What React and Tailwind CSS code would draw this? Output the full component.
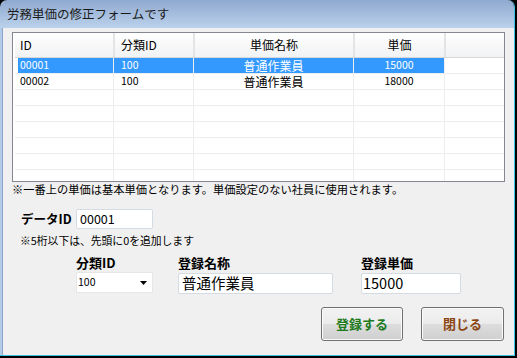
import React from "react";

const FONT = { fontFamily: '"Noto Sans CJK JP", "Noto Sans", sans-serif' };

const rows = [
  { id: "00001", cat: "100", name: "普通作業員", price: "15000", sel: true },
  { id: "00002", cat: "100", name: "普通作業員", price: "18000" },
  {}, {}, {}, {}, {}, {},
];

function Row({ r }) {
  const sel = r.sel;
  const cell = sel ? "bg-[#3399ff] text-white" : "bg-white text-black";
  return (
    <div className="flex h-[16px] shrink-0">
      <div className="w-[3px] border-b border-[#ededed] bg-white" />
      <div className={`w-[96px] border-b border-r border-[#ededed] pl-[2px] flex items-center text-[10.5px] leading-none ${cell}`}>{r.id}</div>
      <div className={`w-[80px] border-b border-r border-[#ededed] pl-[7px] flex items-center text-[10.5px] leading-none ${cell}`}>{r.cat}</div>
      <div className={`w-[160px] border-b border-r border-[#ededed] flex items-center justify-center text-[12px] leading-none ${cell}`}>{r.name}</div>
      <div className={`w-[91px] border-b border-r border-[#ededed] flex items-center justify-center text-[10.5px] leading-none ${cell}`}>{r.price}</div>
      <div className="flex-1 border-b border-[#ededed] bg-white" />
    </div>
  );
}

function HeaderCell({ w, children, center, pl }) {
  return (
    <div className={`${w} ${pl || ""} h-full flex items-center ${center ? "justify-center" : ""} border-r-2 border-[#e4e4e4]`}>
      {children}
    </div>
  );
}

export default function App() {
  return (
    <div className="w-[517px] h-[358px] bg-black text-black" style={FONT}>
      <div className="w-[515px] h-[356px] rounded-t-[7px] overflow-hidden flex flex-col border-r border-b border-[#3cc0e4]">
        <div className="h-[28px] shrink-0 bg-gradient-to-b from-[#90a9cf] to-[#bbd2ec] pl-[7px] flex items-center text-[12.5px] text-[#1a1a1a]">
          労務単価の修正フォームです
        </div>
        <div className="flex-1 flex border-l-2 border-[#b4cbe7]">
          <div className="flex-1 flex flex-col border-l border-[#8aa6cc] bg-[#f0f0f0]">
            <div className="pl-[9px] pt-[4px]">
              <div className="w-[493px] h-[150px] border border-[#828790] bg-white pl-[2px] flex flex-col overflow-hidden">
                <div className="h-[25px] shrink-0 flex border-b border-[#d8d8d8] bg-gradient-to-b from-white to-[#f1f2f4] text-[12px]">
                  <HeaderCell w="w-[100px]" pl="pl-[5px]">ID</HeaderCell>
                  <HeaderCell w="w-[80px]" pl="pl-[6px]">分類ID</HeaderCell>
                  <HeaderCell w="w-[160px]" center>単価名称</HeaderCell>
                  <HeaderCell w="w-[91px]" center>単価</HeaderCell>
                  <div className="flex-1" />
                </div>
                {rows.map((r, i) => (
                  <Row key={i} r={r} />
                ))}
              </div>
              <div className="h-[14px] leading-[14px] text-[11.25px] whitespace-nowrap">
                ※一番上の単価は基本単価となります。単価設定のない社員に使用されます。
              </div>
            </div>

            <div className="flex items-center mt-[13px] pl-[18px]">
              <div className="w-[55px] text-[12.5px] font-bold leading-none">データID</div>
              <div className="w-[77px] h-[20px] bg-white border border-[#d5dbe3] rounded-[2px] pl-[3px] flex items-center text-[12.5px] leading-none">
                00001
              </div>
            </div>
            <div className="mt-[4px] pl-[17px] h-[14px] leading-[14px] text-[10.8px] whitespace-nowrap">
              ※5桁以下は、先頭に0を追加します
            </div>

            <div className="flex mt-[9px]">
              <div className="ml-[73px] w-[77px] flex flex-col">
                <div className="h-[14px] leading-[14px] text-[13px] font-bold">分類ID</div>
                <div className="mt-[2px] h-[21px] bg-white border border-[#e6e6e6] flex items-center justify-between pl-[1px] pr-[5px]">
                  <span className="text-[10.5px] leading-none">100</span>
                  <svg width="7" height="4" viewBox="0 0 7 4">
                    <polygon points="0,0 7,0 3.5,4" fill="#000" />
                  </svg>
                </div>
              </div>
              <div className="ml-[25px] w-[155px] flex flex-col">
                <div className="h-[14px] leading-[14px] text-[13px] font-bold">登録名称</div>
                <div className="mt-[3px] h-[21px] bg-white border border-[#d5dbe3] rounded-[2px] pl-[3px] flex items-center text-[14.5px] leading-none">
                  普通作業員
                </div>
              </div>
              <div className="ml-[28px] w-[100px] flex flex-col">
                <div className="h-[14px] leading-[14px] text-[13px] font-bold">登録単価</div>
                <div className="mt-[3px] h-[21px] bg-white border border-[#d5dbe3] rounded-[2px] pl-[1px] flex items-center text-[14.5px] leading-none">
                  15000
                </div>
              </div>
            </div>

            <div className="flex mt-[13px] pl-[318px] gap-[18px]">
              <button className="w-[82px] h-[34px] rounded-[3px] border border-[#707070] shadow-[inset_0_0_0_1px_#fbfbfb] bg-[linear-gradient(to_bottom,#f2f2f2_0%,#ebebeb_50%,#dddddd_50%,#cfcfcf_100%)] text-[13px] font-bold text-[#1d7a1d] flex items-center justify-center">
                登録する
              </button>
              <button className="w-[83px] h-[34px] rounded-[3px] border border-[#707070] shadow-[inset_0_0_0_1px_#fbfbfb] bg-[linear-gradient(to_bottom,#f2f2f2_0%,#ebebeb_50%,#dddddd_50%,#cfcfcf_100%)] text-[13px] font-bold text-[#8b4513] flex items-center justify-center">
                閉じる
              </button>
            </div>
          </div>
        </div>
      </div>
    </div>
  );
}
